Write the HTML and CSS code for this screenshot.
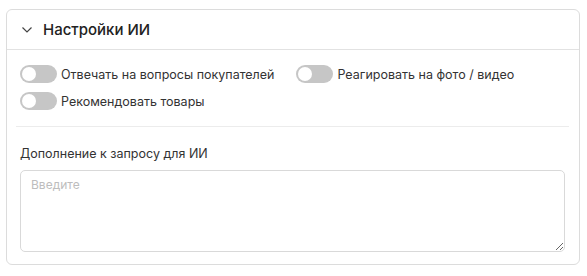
FILE: index.html
```html
<html>
<head>
    <meta http-equiv="Content-Type" content="text/html; charset=UTF-8" />
    <title>Настройки ИИ</title>
    <link rel="stylesheet" href="styles.css">
</head>
<body>

<div class="card">
    <div class="cardHead">
        <svg class="chevron" width="12" height="8" viewBox="0 0 12 8">
            <path d="M1.5 1.5 L6 6 L10.5 1.5" fill="none" stroke="#444" stroke-width="1.2" />
        </svg>
        <span class="cardTitle">Настройки ИИ</span>
    </div>

    <div class="cardBody">
        <div class="toggles">
            <label class="toggle"><span class="switch"></span>Отвечать на вопросы покупателей</label>
            <label class="toggle"><span class="switch"></span>Реагировать на фото / видео</label>
            <label class="toggle"><span class="switch"></span>Рекомендовать товары</label>
        </div>

        <div class="sep"></div>

        <div class="field">
            <div class="fieldLabel">Дополнение к запросу для ИИ</div>
            <textarea class="input" placeholder="Введите"></textarea>
        </div>
    </div>
</div>

</body>
</html>
```

FILE: styles.css
```css
        html {
            width:100%;
            height:100%;
        }

        body {
            font-size: 12.5px;
            font-family: Inter, "Noto Sans", sans-serif;
            color: #333;
            background: #fff;
            margin: 0;
            padding: 9px 7px 0 6px;
        }

        .card {
            border: solid 1px #dcdcdc;
            border-radius: 6px;
            height: 256px;
            box-sizing: border-box;
        }

        .cardHead {
            display: flex;
            align-items: center;
            height: 39px;
            padding-left: 14px;
            border-bottom: solid 1px #e2e2e2;
        }

        .chevron {
            margin-right: 10px;
        }

        .cardTitle {
            font-size: 15px;
            font-weight: 500;
            color: #222;
        }

        .cardBody {
            padding: 15px 14px 0 13px;
        }

        .toggles {
            display: flex;
            flex-wrap: wrap;
            row-gap: 9px;
        }

        .toggle {
            display: flex;
            align-items: center;
            height: 18px;
            margin-right: 22px;
            color: #333;
        }

        .switch {
            position: relative;
            display: inline-block;
            width: 37px;
            height: 18px;
            border-radius: 9px;
            background: #c6c6c6;
            margin-right: 4px;
            flex-shrink: 0;
        }

        .switch::after {
            content: "";
            position: absolute;
            left: 2px;
            top: 2px;
            width: 14px;
            height: 14px;
            border-radius: 50%;
            background: #fff;
        }

        .sep {
            border-top: solid 1px #ececec;
            margin: 16px -4px 0 -4px;
        }

        .field {
            padding-top: 19px;
        }

        .fieldLabel {
            color: #333;
            margin-bottom: 9px;
        }

        .input {
            display: block;
            width: 100%;
            height: 82px;
            box-sizing: border-box;
            border: solid 1px #d9d9d9;
            border-radius: 5px;
            padding: 6px 10px;
            font-family: Inter, "Noto Sans", sans-serif;
            font-size: 12px;
            color: #333;
            resize: vertical;
            outline: none;
        }

        .input::placeholder {
            color: #bdbdbd;
        }
```
